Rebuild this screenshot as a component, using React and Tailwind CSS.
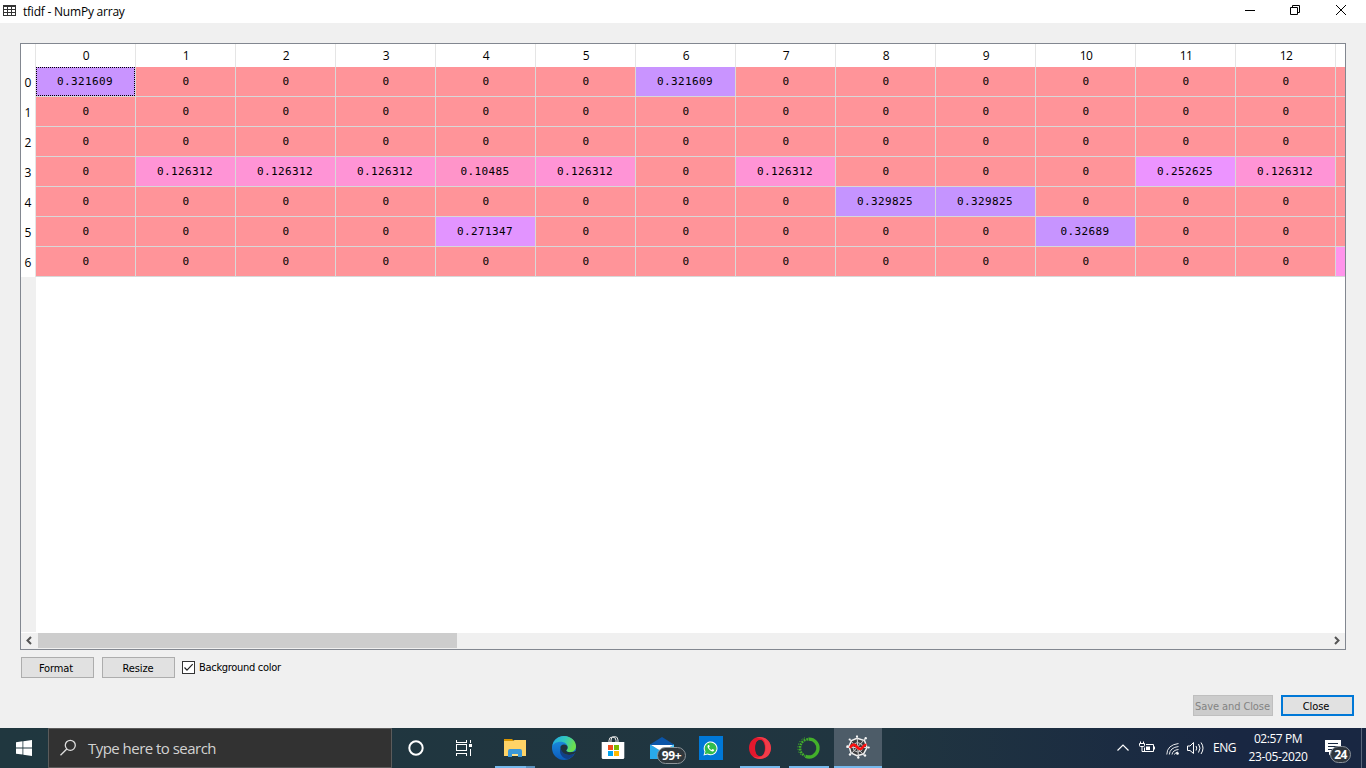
import React from "react";

const Z = "bg-[#ff9499]";
const COLORS = {
  "0": Z,
  "0.321609": "bg-[#c994ff]",
  "0.126312": "bg-[#ff94d6]",
  "0.10485": "bg-[#ff94c9]",
  "0.252625": "bg-[#ec94ff]",
  "0.329825": "bg-[#c594ff]",
  "0.271347": "bg-[#e294ff]",
  "0.32689": "bg-[#c794ff]",
};

const fill = (cells = {}) => Array.from({ length: 13 }, (_, i) => cells[i] || "0");
const ROWS = [
  fill({ 0: "0.321609", 6: "0.321609" }),
  fill(),
  fill(),
  fill({ 1: "0.126312", 2: "0.126312", 3: "0.126312", 4: "0.10485", 5: "0.126312", 7: "0.126312", 11: "0.252625", 12: "0.126312" }),
  fill({ 8: "0.329825", 9: "0.329825" }),
  fill({ 4: "0.271347", 10: "0.32689" }),
  fill(),
];

function TitleBar() {
  return (
    <header className="flex h-[23px] shrink-0 items-start bg-white">
      <svg className="ml-[3px] mt-[5px] h-[11px] w-[13px]" viewBox="0 0 13 11" shapeRendering="crispEdges">
        <path d="M0 0h13v11H0z" fill="#333" />
        <path d="M1 2h3v2H1zM5 2h3v2H5zM9 2h3v2H9zM1 5h3v2H1zM5 5h3v2H5zM9 5h3v2H9zM1 8h3v2H1zM5 8h3v2H5zM9 8h3v2H9z" fill="#fff" />
      </svg>
      <span className="ml-[7px] mt-1 font-['Open_Sans',sans-serif] text-[12px] leading-4 tracking-[-0.22px] text-black">tfidf - NumPy array</span>
      <div className="ml-auto flex">
        <svg className="h-[23px] w-[46px]" viewBox="0 0 46 23"><path d="M18 10.5h10" stroke="#000" /></svg>
        <svg className="h-[23px] w-[45px]" viewBox="0 0 45 23" fill="none" stroke="#000"><path d="M17.5 7.500h7v7h-7zM19.500 7.500v-2h7v7h-2" /></svg>
        <svg className="h-[23px] w-[48px]" viewBox="0 0 48 23" fill="none" stroke="#000"><path d="M18 5l10 10M28 5l-10 10" /></svg>
      </div>
    </header>
  );
}

function ArrayTable() {
  return (
    <section className="ml-5 mt-5 flex h-[607px] w-[1326px] flex-col overflow-hidden border border-[#828790] bg-white font-['Open_Sans',sans-serif] text-[12px] text-black">
      <div className="flex h-[23px] shrink-0">
        <div className="w-[15px] shrink-0 border-r border-[#e5e5e5]" />
        {ROWS[0].map((_, i) => (
          <div key={i} className="w-[100px] shrink-0 border-r border-[#e5e5e5] pl-px text-center leading-[24px] tracking-[-0.5px]">{i}</div>
        ))}
      </div>
      {ROWS.map((row, r) => (
        <div key={r} className="flex h-[30px] shrink-0">
          <div className="w-[15px] shrink-0 border-r border-[#e5e5e5] text-center leading-[31px]">{r}</div>
          {row.map((v, c) => (
            <div key={c} className={`w-[100px] shrink-0 border-b border-r border-[#d8d8d8] text-center font-['DejaVu_Sans_Mono',monospace] text-[11px] leading-[30px] tracking-[0.38px] text-black ${COLORS[v]}`}>
              {r === 0 && c === 0 ? <div className="h-[29px] w-[99px] border border-dotted border-black pr-px leading-[28px]">{v}</div> : <div className={v === "0" ? "pl-px" : "pr-px"}>{v}</div>}
            </div>
          ))}
          <div className={`flex-1 border-b border-[#d8d8d8] ${r === 6 ? "bg-[#ff94eb]" : Z}`} />
        </div>
      ))}
      <div className="w-[15px] flex-1 bg-[#f0f0f0]" />
      <div className="mt-px flex h-4 shrink-0 items-start bg-[#f0f0f0]">
        <svg className="h-[15px] w-[17px]" viewBox="0 0 17 15" fill="none" stroke="#555" strokeWidth="2"><path d="M10 4L6.500 7.500 10 11" /></svg>
        <div className="h-[15px] w-[419px] bg-[#cdcdcd]" />
        <svg className="ml-auto h-[15px] w-[17px]" viewBox="0 0 17 15" fill="none" stroke="#555" strokeWidth="2"><path d="M7 4L10.500 7.500 7 11" /></svg>
      </div>
    </section>
  );
}

function Start() {
  return (
    <div className="flex w-12 items-center justify-center">
      <svg className="h-4 w-4" viewBox="0 0 16 16" fill="#fff"><path d="M0 2.200L6.500 1.300V7.500H0zM7.300 1.200L16 0v7.500H7.300zM0 8.400h6.500v6.200L0 13.700zM7.300 8.400H16V16L7.300 14.800z" /></svg>
    </div>
  );
}

function Opera() {
  return (
    <svg className="h-6 w-6" viewBox="0 0 24 24">
      <path d="M12 1C5.500 1 1 5.900 1 12s4.500 11 11 11 11-4.900 11-11S18.500 1 12 1zm0 3c3 0 4.700 3.600 4.700 8s-1.700 8-4.700 8-4.700-3.600-4.700-8S9 4 12 4z" fill="#e3182d" fillRule="evenodd" />
      <path d="M12 1c6.500 0 11 4.900 11 11s-4.500 11-11 11c-2.800 0-5-1-7-2.700 5 2.500 12.500 1 12.500-8.300S13 1.600 8 2c1.200-.6 2.400-1 4-1z" fill="#ff5b60" fillOpacity=".55" />
      <path d="M12 4c3 0 4.700 3.600 4.700 8s-1.700 8-4.700 8-4.700-3.600-4.700-8S9 4 12 4z" fill="#20333f" />
    </svg>
  );
}

function Spyder() {
  return (
    <svg className="h-6 w-6" viewBox="0 0 24 24" fill="none">
      <path d="M11 3.200L18.500 5.500 21 12.500 17.500 19 11 20.800 5 18 3 11 5.500 5.500z" fill="#3b3c3e" stroke="#f0f0f0" strokeWidth="1.500" />
      <path d="M11 .5l1.500 22.500M.5 12.500l22.500 0M3.500 4.500L18.500 21M20 3L4 20" stroke="#d8d8d8" strokeWidth="1" />
      <path d="M11.500 7.500l4 1.500 1.500 3.500-2 3.500-3.500 1L8 15.500 6.800 12 8.200 9z" stroke="#c4c4c4" />
      <g fill="#f6f6f6"><circle cx="11" cy="1.500" r="1.100" /><circle cx="3.700" cy="4.500" r="1.100" /><circle cx="19.700" cy="3.300" r="1.200" /><circle cx="1.500" cy="11.500" r="1.200" /><circle cx="22.700" cy="12.500" r="1.100" /><circle cx="4" cy="19.500" r="1.200" /><circle cx="12.300" cy="22.500" r="1.200" /><circle cx="19" cy="20.500" r="1.200" /></g>
      <path d="M4 12.800c2-3.800 4-3.800 6-1.800s4 4.500 6.500 1.500c1.200-1.700 2-3 4-2.700" stroke="#fa1010" strokeWidth="2.600" />
    </svg>
  );
}

function Edge() {
  return (
    <svg className="h-6 w-6" viewBox="0 0 24 24">
      <defs>
        <linearGradient id="edgeTop" x1="0" y1="0" x2="1" y2=".3"><stop stopColor="#1fa9e3" /><stop offset=".55" stopColor="#32c7bd" /><stop offset="1" stopColor="#6be04e" /></linearGradient>
        <linearGradient id="edgeSide" x1="0" y1="0" x2="0" y2="1"><stop stopColor="#1d95e4" /><stop offset="1" stopColor="#0c5bbb" /></linearGradient>
      </defs>
      <circle cx="12" cy="12" r="12" fill="url(#edgeSide)" />
      <path d="M.3 10C1.500 3.800 6.300 0 12 0c7.200 0 12 5.200 12 10.300 0 3.500-2.600 5.900-6 5.900-2.600 0-4-1-3.700-1.900.4-.8 1.300-1.300 1.300-3.100C15.600 8 12.300 5.800 8.500 5.800 4.300 5.800 1.300 8 .3 10z" fill="url(#edgeTop)" />
      <path d="M8.500 12.500c-2 5 2.500 10.800 8 10.400 2.500-1 4.800-3 6-5.300-2 1-3.500 1.300-5.300 1.300-4.200 0-7.300-2.600-8.700-6.400z" fill="#123f86" />
      <path d="M14.300 14.300c.4-.8 1.300-1.300 1.300-3.100C15.600 9.400 13.800 8.500 12 8.500c-2.500 0-4 1.700-3.500 4 1.200 3.900 4.500 6.400 8.700 6.400 2.300 0 3.900-.5 5.300-1.300 .7-.6 1.300-1.400 1.700-2.600-1.700 1-3.800 1.200-6.200 1.200-2.600 0-4-1-3.700-1.900z" fill="#1f323e" />
    </svg>
  );
}

function Taskbar() {
  const item = "flex w-[49px] shrink-0 items-center justify-center";
  return (
    <footer className="flex h-10 shrink-0 bg-linear-to-r from-[#20373f] from-0% via-[#203540] via-65% to-[#192742] to-90% text-white">
      <Start />
      <div className="flex w-[344px] items-center border border-[#5b5b5b] bg-[#323232] pl-[10px]">
        <svg className="h-[18px] w-[18px]" viewBox="0 0 18 18" fill="none" stroke="#dedede" strokeWidth="1.300"><circle cx="11.300" cy="6.300" r="5" /><path d="M7.800 10L1.500 16.300" /></svg>
        <span className="ml-[11px] font-['Open_Sans',sans-serif] text-[15px] tracking-[-0.53px] text-[#d2d2d2]">Type here to search</span>
      </div>
      <div className="flex w-12 items-center justify-center">
        <svg className="h-[18px] w-[18px]" viewBox="0 0 18 18" fill="none"><circle cx="9" cy="9" r="6.700" stroke="#fff" strokeWidth="2" /></svg>
      </div>
      <div className="flex w-12 items-center justify-center pr-px">
        <svg className="h-4 w-[17px]" viewBox="0 0 17 16" fill="none" stroke="#fff" shapeRendering="crispEdges"><path d="M1.500 0v2.500h10V0M1.500 16v-2.500h10V16M1.500 4.500h10v6h-10zM15.500 0v3M15.500 8.500V16" /><path d="M14 4h3v3h-3z" fill="#fff" stroke="none" /></svg>
      </div>
      <div className="flex w-[54px] flex-col items-center">
        <svg className="mt-[10px] h-5 w-[22px] shrink-0" viewBox="0 0 22 20">
          <path d="M0 1h8l2 2H0z" fill="#d99500" />
          <path d="M0 3h9l1.500-1H22v16H0z" fill="#ffd366" />
          <path d="M4 19v-6q0-2 2-2h10q2 0 2 2v6h-4v-3H8v3z" fill="#3b98d9" />
          <path d="M8 16h6v2H8z" fill="#ffe08a" />
        </svg>
        <div className="mt-2 flex h-0.5 w-10 shrink-0 bg-[#5b91bd]"><div className="w-[31px] bg-[#76b9ed]" /></div>
      </div>
      <div className="flex w-[46px] items-center justify-center pr-0.5"><Edge /></div>
      <div className={item}>
        <svg className="h-6 w-6" viewBox="0 0 24 24">
          <path d="M8 8V4.500a3.500 3.500 0 0 1 7 0V8M10 8V4a3.500 3.500 0 0 1 7 0v4" stroke="#e8e8e8" fill="none" />
          <path d="M.7 6h22.600v15.500q0 1.500-1.500 1.500H2.200Q.7 23 .7 21.500z" fill="#fff" />
          <path d="M7 9h5v5H7z" fill="#f04e1f" /><path d="M13 9h5v5h-5z" fill="#7fba00" /><path d="M7 15h5v5H7z" fill="#00a4ef" /><path d="M13 15h5v5h-5z" fill="#ffb900" />
        </svg>
      </div>
      <div className="relative flex w-[49px] items-center justify-center">
        <svg className="h-6 w-6" viewBox="0 0 24 24">
          <path d="M0 8.500L12 1l12 7.500V14H0z" fill="#0b55a8" /><path d="M0 8.500l12 7 12-7V23H0z" fill="#28a9ea" /><path d="M12 15.500l12-7V23z" fill="#50d0ff" /><path d="M1 9h22l-10.500 7z" fill="#fff" />
        </svg>
        <span className="absolute left-[20px] top-[19px] flex h-[17px] w-[29px] items-center justify-center rounded-full border border-[#8c9499] bg-[#30383d] font-['Open_Sans',sans-serif] text-[12px] font-bold tracking-[-0.3px]">99+</span>
      </div>
      <div className={item}>
        <div className="flex h-6 w-6 items-center justify-center bg-[#0078d7]">
          <svg className="h-[15px] w-[15px]" viewBox="0 0 15 15">
            <path d="M.5 14.500l1-3.800A6.900 6.900 0 1 1 4.300 13.500z" fill="#fff" />
            <path d="M1.700 13.300l.8-3a5.900 5.900 0 1 1 2.200 2.200z" fill="#31bd4c" />
            <path d="M5.200 4c-1 .7-1 2.100.5 4s3.600 3 4.700 2.200c.8-.6.9-1.200.7-1.400L9.500 8l-1 .9C7.500 8.600 6.400 7.500 6 6.500l.7-.9L6.100 4z" fill="#fff" />
          </svg>
        </div>
      </div>
      <div className="flex w-[49px] flex-col items-center"><div className="flex h-[38px] items-center pt-px"><Opera /></div><div className="h-0.5 w-10 bg-[#76b9ed]" /></div>
      <div className="flex w-[49px] flex-col items-center">
        <div className="flex h-[38px] items-center pt-px">
          <svg className="h-6 w-6" viewBox="0 0 24 24" fill="none" stroke="#43b02a">
            <path d="M11.500 3.200A8.900 8.900 0 1 1 8.500 20.200" strokeWidth="3.300" />
            <path d="M11 3.200A8.900 8.900 0 0 0 8 20" strokeWidth="2.400" strokeDasharray="1.800 .9" /><path d="M8 1.800A10.500 10.500 0 0 0 5 20" strokeWidth="1" strokeDasharray="1.300 1.500" />
          </svg>
        </div>
        <div className="h-0.5 w-10 bg-[#76b9ed]" />
      </div>
      <div className="ml-px flex w-12 flex-col items-center bg-[#4d5c68]"><div className="flex h-[38px] items-center"><Spyder /></div><div className="h-0.5 w-12 bg-[#76b9ed]" /></div>
      <div className="ml-auto flex items-center font-['Open_Sans',sans-serif] text-[12px]">
        <svg className="h-4 w-3" viewBox="0 0 12 16" fill="none" stroke="#fff" strokeWidth="1.200"><path d="M.5 10.500L6 5l5.500 5.500" /></svg>
        <svg className="ml-[10px] h-4 w-4" viewBox="0 0 16 16" fill="none" stroke="#fff"><path d="M1.500 1.500v2M4.500 1.500v2M.5 3.500h5v2q0 1-1 1h-3q-1 0-1-1zM3 6.500v5h3M7 4.500h7.500v7h-9v-4M15.500 6.500v3" /><path d="M7 6.500h4v3.500H7z" fill="#fff" stroke="none" /></svg>
        <svg className="ml-[11px] h-4 w-[14px]" viewBox="0 0 14 16" fill="none" stroke="#fff"><path d="M.8 14.500Q1 5 12.500 3.500M3.300 14.500Q4 7.500 12.500 6.500M6 14.500Q6.800 10 12.500 9.500M8.500 14.500Q9 12.500 12 12" strokeWidth=".9" /><circle cx="11.500" cy="13.500" r="1.300" fill="#fff" stroke="none" /></svg>
        <svg className="ml-[7px] h-4 w-[17px]" viewBox="0 0 17 16" fill="none" stroke="#fff"><path d="M.5 6v4.500H3l3.500 3v-11L3 6zM9 6q1.500 2 0 4.500M11.500 4q3 4 0 8.500M14 2.500q4 5.500 0 11.500" /></svg>
        <span className="ml-[9px] w-6 whitespace-nowrap tracking-[-0.5px]">ENG</span>
        <div className="ml-[8px] mr-px w-[66px] whitespace-nowrap text-center leading-[18px] tracking-[-0.45px]"><div>02:57 PM</div><div className="tracking-[-0.35px]">23-05-2020</div></div>
        <div className="relative ml-[13px] h-10 w-9">
          <svg className="mt-3 h-4 w-4" viewBox="0 0 16 16"><path d="M0 0h16v12H7l-3 3.500V12H0z" fill="#fff" /><path d="M3 3.500h10M3 6.500h10M3 9.500h8" stroke="#182840" /></svg>
          <span className="absolute left-[5px] top-[18px] flex h-[17px] w-[21px] items-center justify-center rounded-full border border-[#8b929b] bg-[#2e353d] text-[12px] font-bold tracking-[-0.6px]">24</span>
        </div>
        <div className="mr-[4px] h-10 w-px bg-[#59667a]" />
      </div>
    </footer>
  );
}

export default function App() {
  const button = "flex h-[21px] items-center justify-center border border-[#adadad] bg-[#e1e1e1]";
  return (
    <div className="flex h-[768px] w-[1366px] flex-col overflow-hidden bg-[#f0f0f0]">
      <TitleBar />
      <ArrayTable />
      <div className="flex h-[78px] shrink-0 flex-col font-['DejaVu_Sans_Condensed','DejaVu_Sans',sans-serif] text-[11px] tracking-[-0.3px] text-black">
        <div className="ml-[21px] mt-[7px] flex items-center">
          <button className={`${button} w-[73px] pr-[3px] pt-[3px] tracking-[-0.1px]`}>Format</button>
          <button className={`${button} ml-2 w-[73px] pr-px pt-[3px] tracking-[-0.1px]`}>Resize</button>
          <div className="ml-[7px] flex h-[13px] w-[13px] items-center justify-center border border-[#333] bg-white">
            <svg className="h-[11px] w-[11px]" viewBox="0 0 11 11" fill="none" stroke="#222" strokeWidth="1.200"><path d="M1.500 5.500L4 8.200 9.700 2.200" /></svg>
          </div>
          <span className="ml-1 pt-[2px]">Background color</span>
        </div>
        <div className="mr-3 mt-[17px] flex justify-end gap-2">
          <button className="flex h-[21px] w-[80px] items-center justify-center whitespace-nowrap border border-[#bfbfbf] bg-[#cccccc] pr-px pt-[3px] tracking-[-0.1px] text-[#838383]">Save and Close</button>
          <button className="flex h-[21px] w-[73px] items-center justify-center border-2 border-[#0078d7] bg-[#e1e1e1] pr-[3px] pt-[3px] tracking-[-0.1px]">Close</button>
        </div>
      </div>
      <Taskbar />
    </div>
  );
}
